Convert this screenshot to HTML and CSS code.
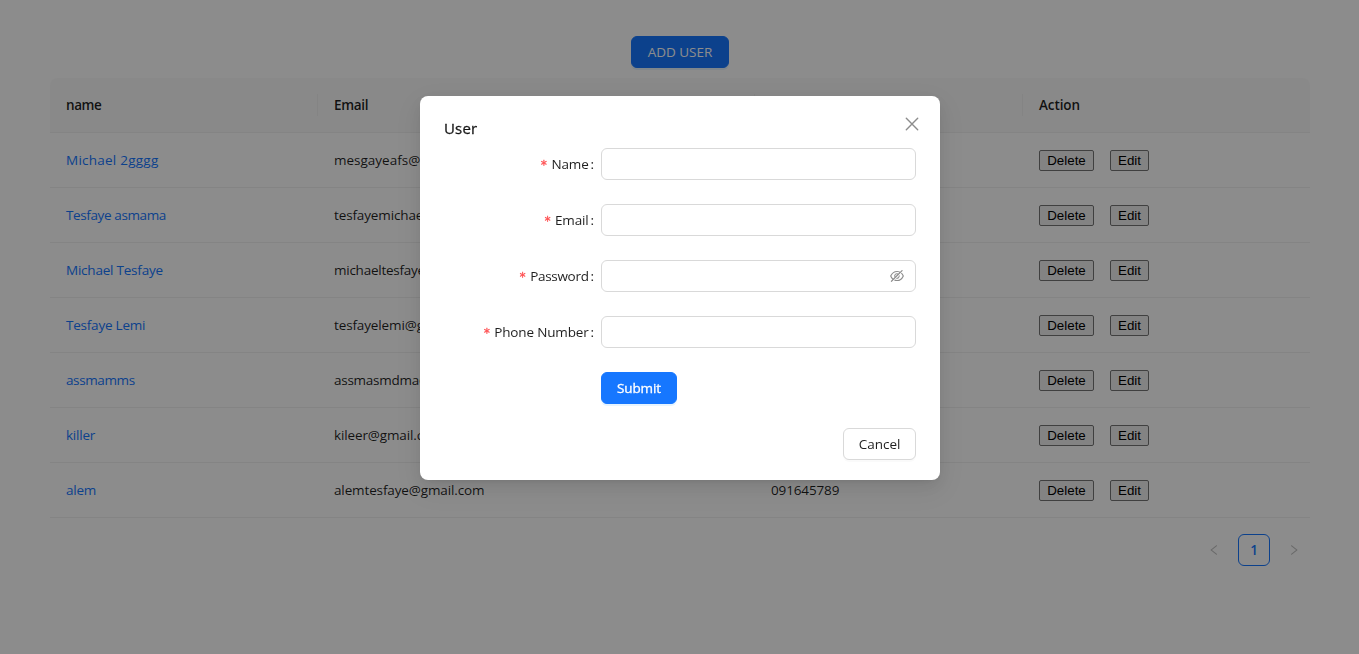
FILE: index.html
```html
<!DOCTYPE html>
<html lang="en">
<head>
<meta charset="utf-8">
<title>Users</title>
<link rel="stylesheet" href="styles.css">
</head>
<body>
<main class="page">
  <button class="btn btn-primary add-user">ADD USER</button>
  <table class="users">
    <colgroup><col class="col-name"><col class="col-email"><col class="col-phone"><col class="col-action"></colgroup>
    <thead><tr><th>name</th><th>Email</th><th>Phone</th><th>Action</th></tr></thead>
    <tbody>
      <tr><td><a class="wide">Michael 2gggg</a></td><td class="loose">mesgayeafs@gmail.com</td><td>0916457890</td><td><div class="actions"><button>Delete</button><button>Edit</button></div></td></tr>
      <tr><td><a class="tight">Tesfaye asmama</a></td><td>tesfayemichael@gmail.com</td><td>0916457890</td><td><div class="actions"><button>Delete</button><button>Edit</button></div></td></tr>
      <tr><td><a>Michael Tesfaye</a></td><td class="tight">michaeltesfaye@gmail.com</td><td>0916457890</td><td><div class="actions"><button>Delete</button><button>Edit</button></div></td></tr>
      <tr><td><a>Tesfaye Lemi</a></td><td>tesfayelemi@gmail.com</td><td>0916457890</td><td><div class="actions"><button>Delete</button><button>Edit</button></div></td></tr>
      <tr><td><a class="tight">assmamms</a></td><td class="tight">assmasmdma@gmail.com</td><td>0916457890</td><td><div class="actions"><button>Delete</button><button>Edit</button></div></td></tr>
      <tr><td><a>killer</a></td><td>kileer@gmail.com</td><td>0916457890</td><td><div class="actions"><button>Delete</button><button>Edit</button></div></td></tr>
      <tr><td><a>alem</a></td><td>alemtesfaye@gmail.com</td><td>091645789</td><td><div class="actions"><button>Delete</button><button>Edit</button></div></td></tr>
    </tbody>
  </table>
  <nav class="pagination">
    <span class="page-arrow"><svg viewBox="64 64 896 896" width="12" height="12"><path d="M724 218.3V141c0-6.700-7.700-10.400-12.900-6.300L260.300 486.800a31.860 31.860 0 000 50.300l450.800 352.100c5.300 4.100 12.900.4 12.900-6.300v-77.300c0-4.900-2.300-9.600-6.100-12.600l-360-281 360-281.100c3.800-3 6.100-7.700 6.100-12.600z"/></svg></span>
    <span class="page-current">1</span>
    <span class="page-arrow"><svg viewBox="64 64 896 896" width="12" height="12"><path d="M765.700 486.800L314.900 134.700A7.970 7.970 0 00302 141v77.300c0 4.900 2.300 9.600 6.100 12.600l360 281.100-360 281.100c-3.900 3-6.100 7.700-6.100 12.600V883c0 6.700 7.700 10.400 12.900 6.300l450.800-352.100a31.960 31.960 0 000-50.400z"/></svg></span>
  </nav>
</main>
<div class="mask">
  <section class="modal" role="dialog">
    <span class="close"><svg viewBox="0 0 16 16" width="16" height="16"><path d="M2.300 2.300 13.700 13.700M13.700 2.300 2.300 13.700" fill="none" stroke="currentColor" stroke-width="1.400" stroke-linecap="round"/></svg></span>
    <h2 class="modal-title">User</h2>
    <form class="form">
      <div class="field"><label><i>*</i><span>Name</span><b>:</b></label><div class="input"></div></div>
      <div class="field"><label><i>*</i><span>Email</span><b>:</b></label><div class="input"></div></div>
      <div class="field"><label><i>*</i><span class="tight">Password</span><b>:</b></label><div class="input"><svg viewBox="64 64 896 896" width="14" height="14"><path d="M942.200 486.200Q889.470 375.110 816.700 305l-50.880 50.880C807.310 395.530 843.450 447.400 874.700 512 791.500 684.200 673.400 766 512 766q-72.670 0-133.870-22.380L323 798.750Q408 838 512 838q288.300 0 430.200-300.300a60.290 60.290 0 000-51.500zm-63.570-320.640L836 122.880a8 8 0 00-11.320 0L715.310 232.200Q624.860 186 512 186q-288.300 0-430.200 300.300a60.300 60.300 0 000 51.500q56.690 119.400 136.500 191.410L112.480 835a8 8 0 000 11.310L155.170 889a8 8 0 0011.310 0l712.150-712.120a8 8 0 000-11.320zM149.300 512C232.600 339.800 350.700 258 512 258c54.540 0 104.130 9.360 149.120 28.390l-70.300 70.300a176 176 0 00-238.130 238.130l-83.420 83.420C223.100 637.490 183.300 582.280 149.300 512zm246.700 0a112.110 112.110 0 01146.200-106.690L401.310 546.200A112 112 0 01396 512z"/><path d="M508 624c-3.460 0-6.870-.16-10.250-.47l-52.820 52.820a176.090 176.090 0 00227.420-227.420l-52.820 52.820c.31 3.380.47 6.790.47 10.250a111.940 111.940 0 01-112 112z"/></svg></div></div>
      <div class="field"><label><i>*</i><span>Phone Number</span><b>:</b></label><div class="input"></div></div>
      <button type="button" class="btn btn-primary submit">Submit</button>
    </form>
    <footer class="modal-footer"><button class="btn cancel">Cancel</button></footer>
  </section>
</div>
</body>
</html>
```
FILE: styles.css
```css
* { box-sizing: border-box; }
body {
  margin: 0;
  height: 654px;
  overflow: hidden;
  background: #fff;
  color: rgba(0, 0, 0, .88);
  font: 13.5px/22px "Open Sans", "Noto Sans", sans-serif;
}
.page { padding: 36px 49px 0 50px; display: flex; flex-direction: column; }
.btn {
  height: 32px;
  padding: 0;
  border: 1px solid #d9d9d9;
  border-radius: 6px;
  background: #fff;
  box-shadow: 0 2px 0 rgba(0, 0, 0, .02);
  color: rgba(0, 0, 0, .88);
  font: inherit;
}
.btn-primary { border-color: #1677ff; background: #1677ff; color: #fff; box-shadow: 0 2px 0 rgba(5, 145, 255, .1); }
.add-user { width: 98px; align-self: center; }
.users { width: 1260px; margin-top: 10px; table-layout: fixed; border-collapse: separate; border-spacing: 0; }
.col-name { width: 268px; }
.col-email { width: 437px; }
.col-phone { width: 268px; }
.users th, .users td { height: 55px; padding: 0 16px; border-bottom: 1px solid #f0f0f0; text-align: left; letter-spacing: -.13px; }
.users th { background: linear-gradient(#f0f0f0, #f0f0f0) right center / 1px 22px no-repeat #fafafa; font-weight: 600; letter-spacing: -.3px; }
.users th:first-child { border-top-left-radius: 8px; letter-spacing: -.4px; }
.users th:last-child { border-top-right-radius: 8px; background: #fafafa; letter-spacing: -.1px; }
.users a { color: #1677ff; letter-spacing: -.22px; }
.users a.wide { letter-spacing: .24px; }
.users .loose { letter-spacing: 0; }
.users .tight { letter-spacing: -.38px; }
.users td.tight { letter-spacing: -.25px; }
.actions { display: flex; gap: 16px; }
.actions button {
  width: 55px;
  height: 21px;
  padding: 0;
  border: 1px solid #767676;
  border-radius: 2px;
  background: #efefef;
  color: #000;
  font: 13.333px "Liberation Sans", Arial, sans-serif;
}
.actions button + button { width: 39px; }
.pagination { display: flex; justify-content: flex-end; gap: 8px; margin-top: 16px; }
.page-arrow, .page-current { width: 32px; height: 32px; display: flex; align-items: center; justify-content: center; }
.page-arrow { color: rgba(0, 0, 0, .25); }
.page-current { border: 1px solid #1677ff; border-radius: 6px; color: #1677ff; font-weight: 600; }
svg { display: block; fill: currentColor; }
.mask { position: fixed; inset: 0; padding-top: 96px; background: rgba(0, 0, 0, .45); }
.modal {
  position: relative;
  width: 520px;
  height: 384px;
  margin-left: 420px;
  padding: 20px 24px;
  border-radius: 8px;
  background: #fff;
  box-shadow: 0 6px 16px 0 rgba(0, 0, 0, .08), 0 3px 6px -4px rgba(0, 0, 0, .12), 0 9px 28px 8px rgba(0, 0, 0, .05);
}
.close { position: absolute; top: 20px; right: 20px; color: rgba(0, 0, 0, .45); }
.modal-title { margin: 0 0 8px; font-size: 15px; line-height: 24px; font-weight: 500; letter-spacing: .15px; -webkit-text-stroke: .3px currentColor; }
.form { display: flex; flex-direction: column; gap: 24px; }
.field { display: flex; justify-content: flex-end; }
.field label { display: flex; align-items: center; letter-spacing: -.15px; }
.field label .tight { letter-spacing: -.3px; }
.field i { margin: 2px 4px 0 0; color: #ff4d4f; font: 12px/22px "DejaVu Sans Mono", monospace; -webkit-text-stroke: .3px currentColor; }
.field b { margin: 0 7px 0 2px; font-weight: 400; }
.input { width: 315px; height: 32px; padding-right: 11px; display: flex; align-items: center; justify-content: flex-end; border: 1px solid #d9d9d9; border-radius: 6px; color: rgba(0, 0, 0, .45); }
.submit { width: 76px; margin-left: 157px; letter-spacing: -.1px; -webkit-text-stroke: .3px currentColor; }
.modal-footer { display: flex; justify-content: flex-end; margin-top: 24px; }
.cancel { width: 73px; }
```
